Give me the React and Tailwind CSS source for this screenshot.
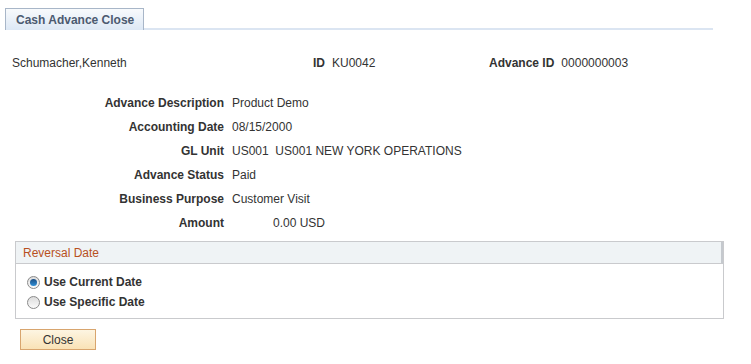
import React from "react";

const font = { fontFamily: '"Liberation Sans", Arial, sans-serif' };

const fields = [
  ["Advance Description", "Product Demo"],
  ["Accounting Date", "08/15/2000"],
  ["GL Unit", "US001  US001 NEW YORK OPERATIONS"],
  ["Advance Status", "Paid"],
  ["Business Purpose", "Customer Visit"],
  ["Amount", "0.00 USD"],
];

const Radio = ({ checked }) => (
  <span className="relative inline-flex w-[13px] h-[13px] rounded-full border border-[#8a8a8a] bg-gradient-to-b from-[#dcdcdc] to-[#fbfbfb] items-center justify-center">
    {checked && (
      <span className="w-[7px] h-[7px] rounded-full bg-gradient-to-b from-[#1b4f86] to-[#2f8fd6]" />
    )}
  </span>
);

export default function App() {
  return (
    <div className="w-[751px] h-[364px] bg-white text-[12px] text-[#333]" style={font}>
      {/* page tab */}
      <div className="flex items-end pt-[8px] pl-[5px] pr-[38px]">
        <div className="h-[22px] w-[139px] border border-b-0 border-[#a8b6c8] bg-gradient-to-b from-[#f8fafc] to-[#dde8f5] flex items-center pl-[10px] font-bold text-[#4c5a70]">
          Cash Advance Close
        </div>
        <div className="flex-1 h-[2px] bg-[#dbe5f2]" />
      </div>

      {/* header row */}
      <div className="flex items-center h-[20px] mt-[23px]">
        <div className="w-[313px] pl-[12px]">Schumacher,Kenneth</div>
        <div className="w-[176px] flex gap-[7px]">
          <span className="font-bold">ID</span>
          <span>KU0042</span>
        </div>
        <div className="flex gap-[7px]">
          <span className="font-bold">Advance ID</span>
          <span>0000000003</span>
        </div>
      </div>

      {/* detail fields */}
      <div className="mt-[18px] flex flex-col">
        {fields.map(([label, value]) => (
          <div key={label} className="flex items-center h-[24px]">
            <div className="w-[224px] text-right font-bold">{label}</div>
            <div className={label === "Amount" ? "pl-[49px] whitespace-pre" : "pl-[8px] whitespace-pre"}>{value}</div>
          </div>
        ))}
      </div>

      {/* reversal date group */}
      <div className="ml-[15px] mt-[6px] w-[709px] h-[78px] border border-[#c9cacd]">
        <div className="h-[22px] bg-[#eff3f5] border-b border-[#c9cacd] border-r-2 border-r-[#c5c9ce] flex items-center pl-[7px] text-[#b8501e]">
          Reversal Date
        </div>
        <div className="flex flex-col pl-[11px] pt-[8px] font-bold">
          <label className="flex items-center gap-[4px] h-[20px]">
            <Radio checked />
            Use Current Date
          </label>
          <label className="flex items-center gap-[4px] h-[20px]">
            <Radio />
            Use Specific Date
          </label>
        </div>
      </div>

      {/* close button */}
      <div className="ml-[20px] mt-[10px]">
        <button className="w-[76px] h-[21px] border border-[#d8a56e] bg-gradient-to-b from-[#fdf5e2] to-[#f9e2b6] text-[#333] text-[12px] flex items-center justify-center">
          Close
        </button>
      </div>
    </div>
  );
}
